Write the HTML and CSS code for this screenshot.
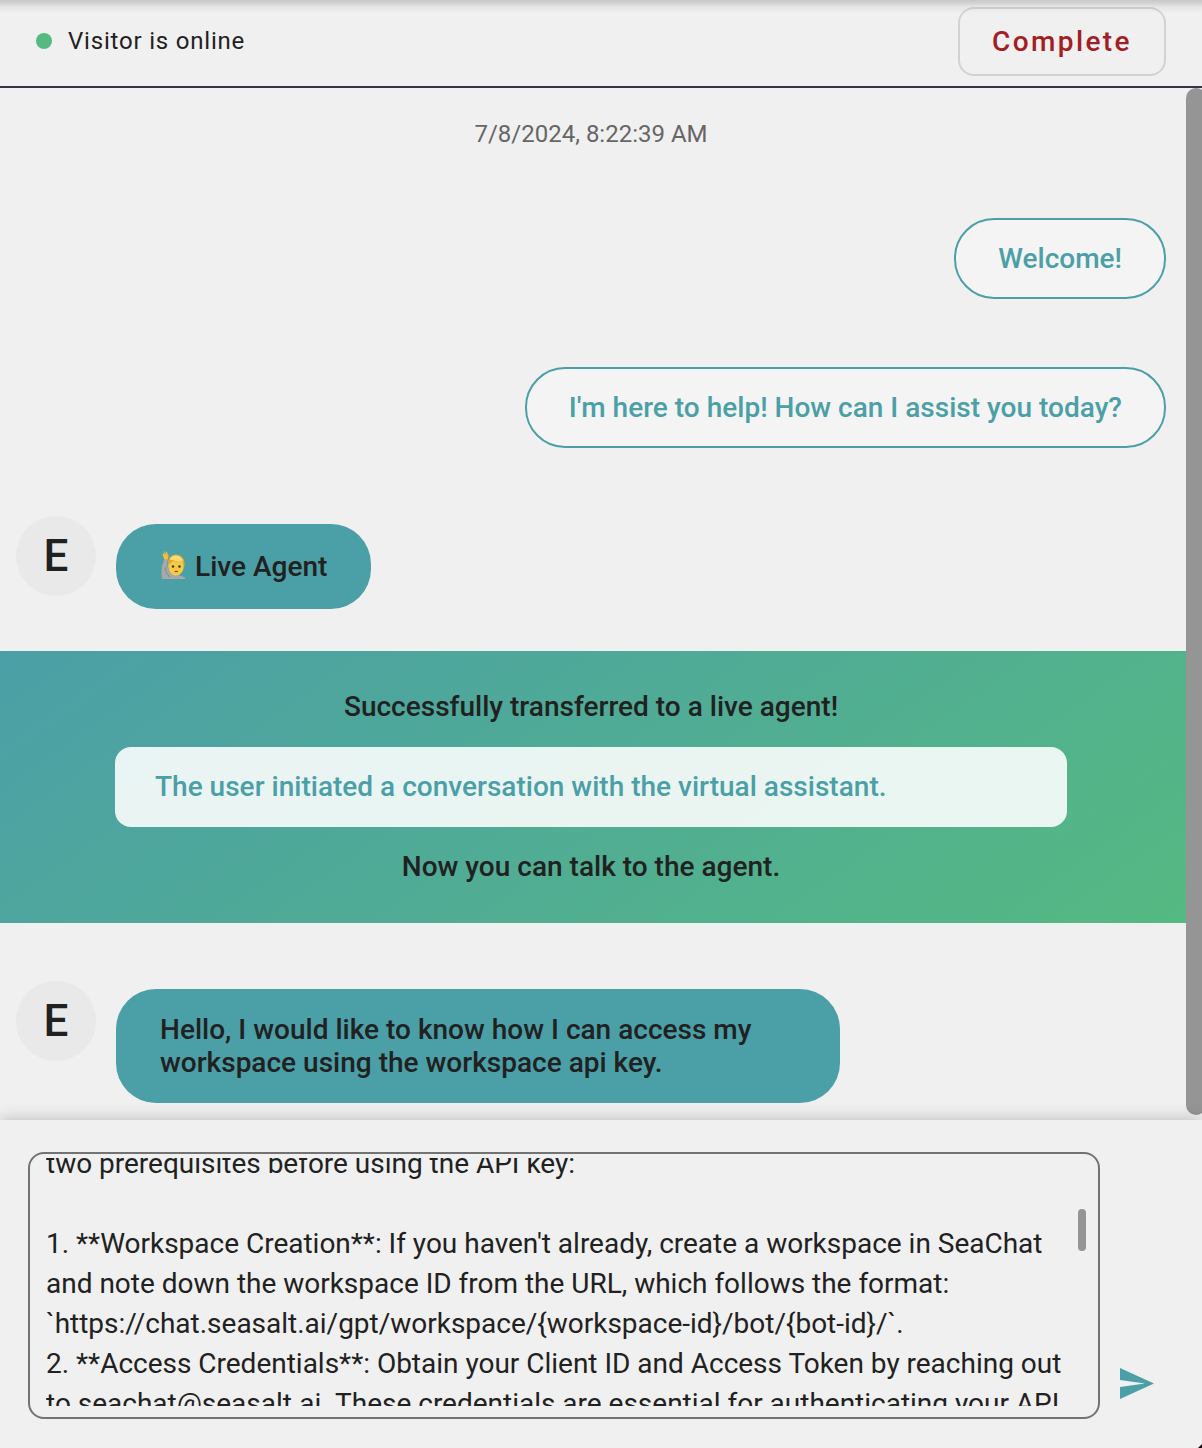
FILE: index.html
```html
<!DOCTYPE html>
<html lang="en">
<head>
<meta charset="utf-8">
<title>Live chat</title>
<link rel="stylesheet" href="styles.css">
</head>
<body>
<div class="app">
  <header class="header">
    <div class="status"><span class="dot"></span><span class="status-text">Visitor is online</span></div>
    <button class="complete">Complete</button>
  </header>
  <main class="chat">
    <div class="messages">
      <div class="date"><span>7/8/2024, 8:22:39 AM</span></div>
      <div class="row sent first"><div class="bubble out"><span>Welcome!</span></div></div>
      <div class="row sent"><div class="bubble out"><span>I'm here to help! How can I assist you today?</span></div></div>
      <div class="row received">
        <div class="avatar"><span>E</span></div>
        <div class="bubble in agent">
          <svg class="emoji" viewBox="0 0 28 32" aria-hidden="true">
            <path d="M2 30Q.5 20 3 14Q3.500 11 4.500 9.500L8 10Q6 16 9 22Q12 25.500 16 26Q23 26 26 30Z" fill="#a6a8aa"/>
            <path d="M5 18Q5.500 24 9.500 28" fill="none" stroke="#85888b" stroke-width="1"/>
            <path d="M4 10L2.600 5.500Q2.500 4 3.500 4.500L4.300 6L4.200 2.300Q5 1.500 5.500 5L6.500 2.600Q7.600 2.500 7.500 5.500L8.500 6Q8.800 8.500 7.800 10.500Z" fill="#f4bd35"/>
            <ellipse cx="16" cy="17" rx="7.800" ry="9.500" fill="#f9cb45"/>
            <path d="M8 17Q7 6 16 5.500Q25.500 6 24.500 18L22.500 13Q17 13.500 12.500 12Q11 15 9 15Z" fill="#e0a830"/>
            <path d="M9.500 11Q11 6.500 16 6.500Q22 7 23 12.500Q16 13 12.500 11Q11 10.500 9.500 11" fill="#fbd978"/>
            <circle cx="13" cy="17.500" r="1.300" fill="#4b3424"/><circle cx="19.500" cy="17.500" r="1.300" fill="#4b3424"/>
            <path d="M14.500 22.800Q16.300 21.800 18 22.800" fill="none" stroke="#a5482a" stroke-width="1.300"/>
          </svg>
          <span>Live Agent</span>
        </div>
      </div>
      <section class="banner">
        <p>Successfully transferred to a live agent!</p>
        <div class="summary"><span>The user initiated a conversation with the virtual assistant.</span></div>
        <p>Now you can talk to the agent.</p>
      </section>
      <div class="row received last">
        <div class="avatar"><span>E</span></div>
        <div class="bubble in question"><span>Hello, I would like to know how I can access my<br>workspace using the workspace api key.</span></div>
      </div>
    </div>
    <div class="scrollbar"></div>
  </main>
  <footer class="composer">
    <div class="input">
      <div class="draft">
        <div class="line">two prerequisites before using the API key:</div>
        <div class="line"></div>
        <div class="line"><span>1. **Workspace Creation**: If you haven't already, create a workspace in SeaChat</span></div>
        <div class="line"><span>and note down the workspace ID from the URL, which follows the format:</span></div>
        <div class="line"><span>`https://chat.seasalt.ai/gpt/workspace/{workspace-id}/bot/{bot-id}/`.</span></div>
        <div class="line"><span>2. **Access Credentials**: Obtain your Client ID and Access Token by reaching out</span></div>
        <div class="line"><span>to seachat@seasalt.ai. These credentials are essential for authenticating your API</span></div>
      </div>
      <div class="thumb"></div>
    </div>
    <svg class="send" viewBox="0 0 34 31" aria-label="Send"><path d="M0 0L34 15.500L0 31V19L25 15.500L0 12Z" fill="#4b9fa7"/></svg>
    <span class="corner"></span>
  </footer>
</div>
</body>
</html>
```
FILE: styles.css
```css
* { box-sizing: border-box; }
body {
  margin: 0;
  background: #f0f0f0;
  color: #212121;
  font-family: Roboto, "Liberation Sans", sans-serif;
  font-size: 28px;
}
p { margin: 0; }
.app { display: flex; flex-direction: column; height: 1448px; overflow: hidden; }
.header {
  display: flex;
  align-items: flex-start;
  justify-content: space-between;
  height: 88px;
  padding: 7px 36px 0;
  border-bottom: 2px solid #343840;
  background: linear-gradient(#c8c8c8 0, #d2d2d2 3px, #e6e6e6 7px, #f0f0f0 13px);
  flex: none;
}
.status { display: flex; align-items: center; gap: 16px; height: 68px; }
.dot { width: 16px; height: 16px; border-radius: 50%; background: #55b982; }
.status-text { font-size: 24px; letter-spacing: .8px; line-height: 32px; }
.complete {
  width: 208px;
  height: 69px;
  padding: 0;
  border: 2px solid rgba(0, 0, 0, .12);
  border-radius: 16px;
  background: transparent;
  color: #a31d24;
  font: 500 28px/40px Roboto, "Liberation Sans", sans-serif;
  letter-spacing: 2.4px;
}
.chat { display: flex; height: 1032px; flex: none; overflow: hidden; }
.messages { width: 1186px; flex: none; }
.scrollbar { width: 20px; height: 1027px; flex: none; border-radius: 10px; background: #959595; }
.date {
  padding: 30px 4px 0 0;
  height: 130px;
  font-size: 24px;
  line-height: 32px;
  text-align: center;
  color: #666;
}
.row { display: flex; }
.sent { justify-content: flex-end; padding-right: 20px; margin-bottom: 68px; }
.bubble { border-radius: 40px; font-weight: 500; line-height: 33px; letter-spacing: .01px; white-space: nowrap; }
.out {
  height: 81px;
  padding: 22px 42px;
  border: 2px solid #4b9fa7;
  background: #f4f4f4;
  color: #4b9fa7;
}
.received { padding-left: 16px; gap: 20px; align-items: flex-start; }
.avatar {
  display: flex;
  align-items: center;
  justify-content: center;
  width: 80px;
  height: 80px;
  border-radius: 50%;
  background: #e9e9e9;
  font-size: 44px;
  font-weight: 500;
}
.in { margin-top: 8px; background: #4b9fa7; padding: 24px 44px; }
.agent { display: flex; align-items: center; gap: 7px; width: 255px; height: 85px; }
.emoji { width: 28px; height: 32px; flex: none; margin-top: -4px; }
.banner {
  height: 272px;
  margin-top: 42px;
  padding: 36px 119px 0 115px;
  background: linear-gradient(145deg, #4b9fa7, #55b982);
  text-align: center;
  font-weight: 500;
  line-height: 40px;
  letter-spacing: .01px;
}
.summary {
  height: 80px;
  margin: 20px 0;
  padding: 20px 40px;
  border-radius: 16px;
  background: rgba(255, 255, 255, .88);
  color: #4b9fa7;
  text-align: left;
}
.last { margin-top: 58px; }
.question { width: 724px; height: 114px; }
.composer {
  display: flex;
  align-items: flex-end;
  gap: 20px;
  height: 328px;
  flex: none;
  padding: 32px 48px 29px 28px;
  background: #f0f0f0;
  box-shadow: 0 0 16px rgba(0, 0, 0, .24);
  position: relative;
}
.input {
  display: flex;
  width: 1072px;
  height: 267px;
  flex: none;
  padding: 4px 12px 11px 16px;
  border: 2px solid #737373;
  border-radius: 16px;
}
.draft { width: 1032px; height: 248px; overflow: hidden; flex: none; letter-spacing: -.01px; }
.line { height: 40px; line-height: 40px; white-space: nowrap; }
.line:first-child { margin-top: -14px; }
.thumb { width: 8px; height: 42px; margin-top: 51px; border-radius: 4px; background: #959595; flex: none; }
.send { width: 34px; height: 31px; margin-bottom: 20px; flex: none; }
.corner {
  position: absolute;
  right: 0;
  bottom: 0;
  width: 4px;
  height: 4px;
  background: #1a0710;
  clip-path: polygon(100% 0, 100% 100%, 0 100%);
}
```
